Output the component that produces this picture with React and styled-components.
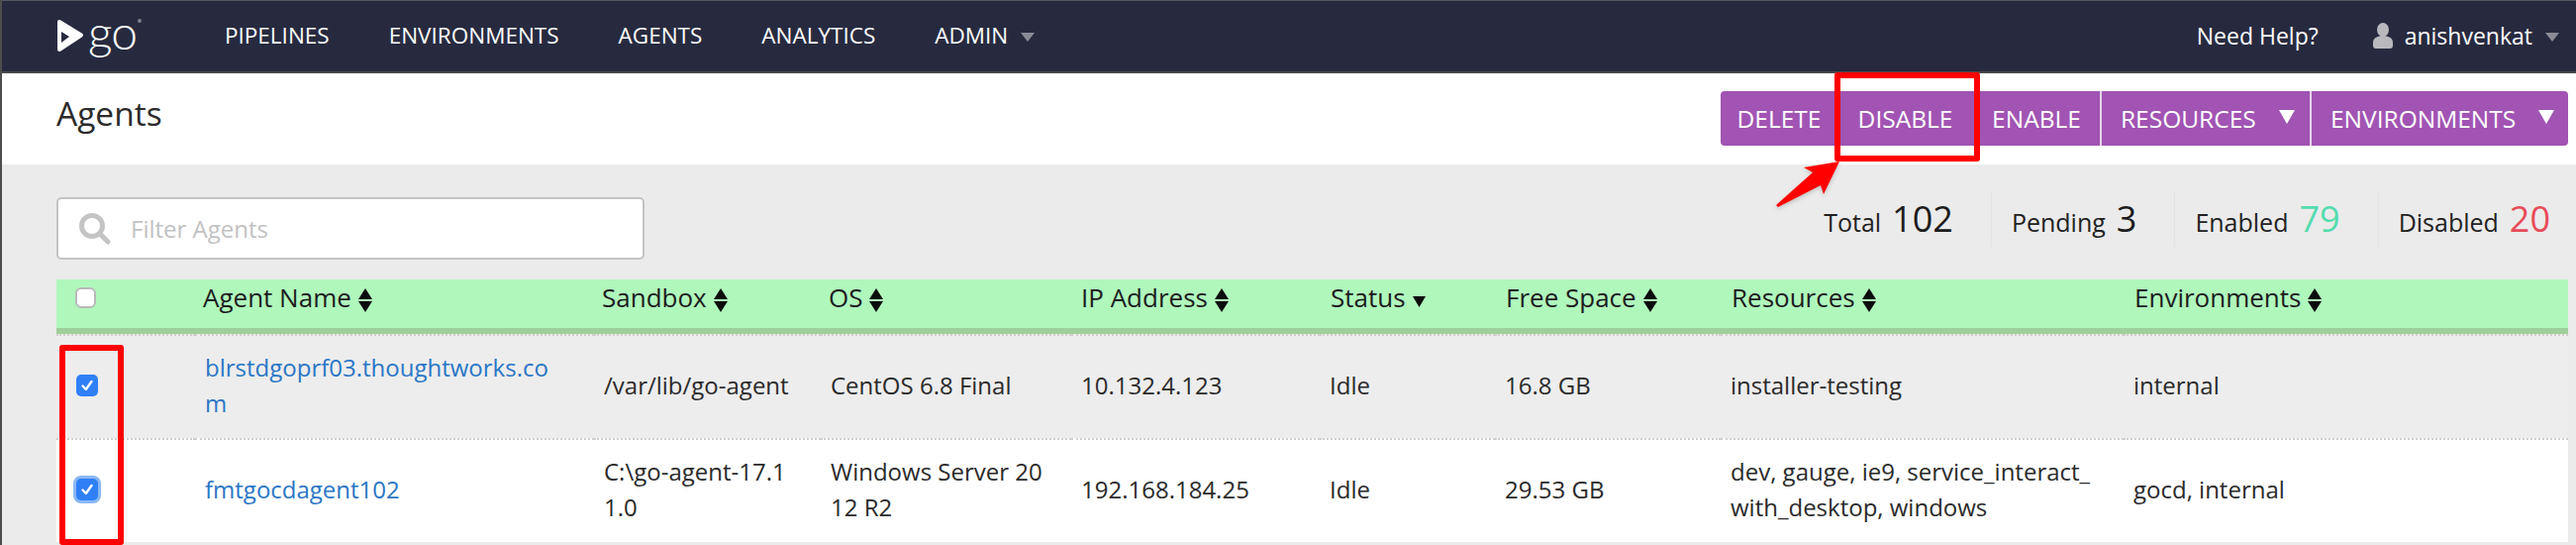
import React from 'react';
import styled, { createGlobalStyle } from 'styled-components';

const GlobalStyle = createGlobalStyle`
  html, body {
    margin: 0;
    padding: 0;
    background: #ebebeb;
    font-family: "Open Sans", "Liberation Sans", sans-serif;
  }
`;

const Page = styled.div`
  position: relative;
  width: 2602px;
  height: 550px;
  box-sizing: border-box;
  overflow: hidden;
  border-left: 2px solid #4d4d4d;
  border-top: 1px solid #55565f;
  background: #ebebeb;
`;

const Header = styled.header`
  height: 69px;
  display: flex;
  align-items: center;
  padding: 0 17px 2px 55px;
  background: #272a3f;
  border-bottom: 2px solid #4a4a4a;
  color: #fff;
`;

const Logo = styled.div`
  width: 170px;
  display: flex;
  align-items: center;
  gap: 4px;
`;

const LogoWord = styled.span`
  font-family: Lato, "Open Sans", sans-serif;
  font-weight: 300;
  font-size: 48px;
  line-height: 40px;
  letter-spacing: -1px;
  margin-top: -8px;
`;

const Nav = styled.nav`
  display: flex;
  align-items: center;
  gap: 60px;
  flex: 1;
`;

const NavItem = styled.a`
  display: flex;
  align-items: center;
  font-size: 22.5px;
  color: #fff;
  text-transform: uppercase;
`;

const Caret = styled.span`
  display: inline-block;
  width: 0;
  height: 0;
  margin-left: 13px;
  margin-top: 4px;
  border-left: 7px solid transparent;
  border-right: 7px solid transparent;
  border-top: 9px solid #8a8b96;
`;

const UserBlock = styled.div`
  display: flex;
  align-items: center;
  font-size: 23px;
  margin-left: 54px;
`;

const HelpLink = styled.a`
  font-size: 23px;
  color: #fff;
`;

const UserName = styled.span`
  margin-left: 11px;
`;

const SubHeader = styled.section`
  height: 92px;
  display: flex;
  justify-content: space-between;
  align-items: flex-start;
  padding: 0 8px 0 55px;
  background: #fff;
`;

const Title = styled.h1`
  margin: 18px 0 0;
  font-size: 33.5px;
  font-weight: 400;
  line-height: 44px;
  color: #2b2b2b;
`;

const ButtonGroup = styled.div`
  display: flex;
  margin-top: 18px;
  border-radius: 4px;
  overflow: hidden;
`;

const ActionButton = styled.button`
  height: 55px;
  width: ${(p) => p.$width}px;
  display: flex;
  align-items: center;
  justify-content: ${(p) => (p.$menu ? 'flex-start' : 'center')};
  padding: ${(p) => (p.$menu ? '0 0 0 19px' : '0')};
  border: none;
  border-left: ${(p) => (p.$divider ? '2px solid #e6d3eb' : 'none')};
  background: #a154b3;
  color: #fff;
  font-family: inherit;
  font-size: 24.5px;
  text-transform: uppercase;
`;

const MenuCaret = styled.span`
  width: 0;
  height: 0;
  margin-left: 23px;
  margin-top: -4px;
  border-left: 8px solid transparent;
  border-right: 8px solid transparent;
  border-top: 14px solid #fff;
`;

const Main = styled.main`
  padding: 33px 8px 0 55px;
`;

const FilterRow = styled.div`
  display: flex;
  justify-content: space-between;
  align-items: flex-start;
  height: 83px;
`;

const SearchBox = styled.div`
  width: 594px;
  height: 63px;
  box-sizing: border-box;
  display: flex;
  align-items: center;
  gap: 19px;
  padding-left: 20px;
  background: #fff;
  border: 2px solid #c4c4c4;
  border-radius: 5px;
`;

const SearchText = styled.span`
  font-size: 24px;
  color: #c2c2c2;
`;

const Stats = styled.div`
  display: flex;
  align-items: center;
  margin-top: -6px;
`;

const Stat = styled.div`
  display: flex;
  align-items: baseline;
  gap: 11px;
  height: 56px;
  line-height: 56px;
  padding: 0 38px 0 20px;
  font-size: 25px;
  color: #222;
  border-left: 1px solid #e3e3e3;

  &:first-child {
    border-left: none;
  }

  &:last-child {
    padding-right: 18px;
  }
`;

const StatValue = styled.span`
  font-size: 36px;
  font-weight: 500;
  color: ${(p) => p.$color || '#1c1c1c'};
`;

const Table = styled.table`
  width: 2537px;
  table-layout: fixed;
  border-collapse: separate;
  border-spacing: 0;
  font-size: 24px;
  color: #2a2a2a;
`;

const HeadCell = styled.th`
  height: 49px;
  padding: 0 0 0 ${(p) => p.$pad}px;
  vertical-align: top;
  text-align: left;
  font-size: 26px;
  font-weight: 400;
  line-height: 36px;
  color: #1c1c1c;
  background: #b0f7bc;
  border-bottom: 6px solid #9fd09b;
  white-space: nowrap;
`;

const Row = styled.tr`
  background: ${(p) => (p.$shaded ? '#ededed' : '#fff')};
`;

const Cell = styled.td`
  height: 100px;
  padding: 0 ${(p) => p.$right}px 3px 10px;
  vertical-align: middle;
  line-height: 36px;
  word-break: break-all;
  border-top: 2px dotted #cfcfcf;
`;

const CheckCell = styled(Cell)`
  padding: 0 0 3px 20px;
`;

const HeadCheckCell = styled(HeadCell)`
  padding: 8px 0 0 19px;
  height: 41px;
`;

const AgentLink = styled.a`
  color: #2a76c6;
`;

const EmptyCheck = styled.span`
  display: block;
  width: 21px;
  height: 21px;
  box-sizing: border-box;
  background: #fff;
  border: 2px solid #b9b9b9;
  border-radius: 6px;
`;

const BlueCheck = styled.span`
  display: flex;
  align-items: center;
  justify-content: center;
  width: 22px;
  height: 22px;
  background: #2f80f7;
  border-radius: 5px;
  box-shadow: ${(p) => (p.$focus ? '0 0 0 3px #8ab8f5' : 'none')};
`;

const SortWrap = styled.span`
  display: inline-block;
  margin-left: 7px;
  vertical-align: ${(p) => p.$drop}px;
  line-height: 0;
`;

const RedBox = styled.div`
  position: absolute;
  box-sizing: border-box;
  left: ${(p) => p.$x}px;
  top: ${(p) => p.$y}px;
  width: ${(p) => p.$w}px;
  height: ${(p) => p.$h}px;
  border: 6px solid #fe0000;
  border-radius: 3px;
  pointer-events: none;
`;

const ArrowSvg = styled.svg`
  position: absolute;
  left: 1790px;
  top: 160px;
  filter: drop-shadow(0 2px 2px rgba(0, 0, 0, 0.18));
`;

const GoMark = () => (
  <svg width="28" height="34" viewBox="0 0 28 34">
    <path d="M3 3 L25 16.5 L3 31 Z" fill="#fff" stroke="#fff" strokeWidth="4" strokeLinejoin="round" />
    <path d="M5 13 L13 18 L5 24 Z" fill="#272a3f" />
  </svg>
);

const GoDot = () => (
  <svg width="4" height="4" viewBox="0 0 4 4" style={{ alignSelf: 'flex-start', marginLeft: -3 }}>
    <circle cx="2" cy="2" r="2" fill="#7d7f8c" />
  </svg>
);

const SearchIcon = () => (
  <svg width="34" height="34" viewBox="0 0 34 34" fill="none" stroke="#c4c4c4" strokeLinecap="round">
    <circle cx="14" cy="14" r="10.5" strokeWidth="5" />
    <path d="M22 22 L30 30" strokeWidth="5" />
  </svg>
);

const UserIcon = () => (
  <svg width="22" height="26" viewBox="0 0 22 26" fill="#b9b9bd">
    <ellipse cx="11" cy="7" rx="6" ry="7" />
    <path d="M1 20 C1 15 6 13 11 13 C16 13 21 15 21 20 L21 23 C21 25 20 26 18 26 L4 26 C2 26 1 25 1 23 Z" />
  </svg>
);

const SortIcon = () => (
  <SortWrap $drop={-5}>
    <svg width="14" height="24" viewBox="0 0 14 24" fill="#0c0c0c">
      <path d="M7 0 L14 11 L0 11 Z" />
      <path d="M0 13 L14 13 L7 24 Z" />
    </svg>
  </SortWrap>
);

const SortDownIcon = () => (
  <SortWrap $drop={0}>
    <svg width="13" height="11" viewBox="0 0 13 11" fill="#0c0c0c">
      <path d="M0 0 L13 0 L6.5 11 Z" />
    </svg>
  </SortWrap>
);

const CheckMark = () => (
  <svg width="14" height="14" viewBox="0 0 14 14" fill="none" stroke="#fff" strokeWidth="2.4" strokeLinecap="round" strokeLinejoin="round">
    <path d="M2.5 7.5 L5.8 11 L11.5 3" />
  </svg>
);

const navItems = ['Pipelines', 'Environments', 'Agents', 'Analytics'];

const columns = [
  { key: 'check', width: 140 },
  { key: 'name', label: 'Agent Name', width: 403, pad: 8, right: 34 },
  { key: 'sandbox', label: 'Sandbox', width: 229, pad: 8, right: 20 },
  { key: 'os', label: 'OS', width: 253, pad: 8, right: 20 },
  { key: 'ip', label: 'IP Address', width: 251, pad: 10, right: 20 },
  { key: 'status', label: 'Status', width: 177, pad: 11, right: 20 },
  { key: 'free', label: 'Free Space', width: 228, pad: 11, right: 20 },
  { key: 'resources', label: 'Resources', width: 407, pad: 11, right: 26 },
  { key: 'environments', label: 'Environments', width: 449, pad: 11, right: 20 },
];

const agents = [
  {
    name: 'blrstdgoprf03.thoughtworks.com',
    sandbox: '/var/lib/go-agent',
    os: 'CentOS 6.8 Final',
    ip: '10.132.4.123',
    status: 'Idle',
    free: '16.8 GB',
    resources: 'installer-testing',
    environments: 'internal',
  },
  {
    name: 'fmtgocdagent102',
    sandbox: 'C:\\go-agent-17.11.0',
    os: 'Windows Server 2012 R2',
    ip: '192.168.184.25',
    status: 'Idle',
    free: '29.53 GB',
    resources: 'dev, gauge, ie9, service_interact_with_desktop, windows',
    environments: 'gocd, internal',
  },
];

export default function App() {
  return (
    <Page>
      <GlobalStyle />
      <Header>
        <Logo>
          <GoMark />
          <LogoWord>go</LogoWord>
          <GoDot />
        </Logo>
        <Nav>
          {navItems.map((item) => (
            <NavItem key={item}>{item}</NavItem>
          ))}
          <NavItem>
            Admin
            <Caret />
          </NavItem>
        </Nav>
        <HelpLink>Need Help?</HelpLink>
        <UserBlock>
          <UserIcon />
          <UserName>anishvenkat</UserName>
          <Caret />
        </UserBlock>
      </Header>

      <SubHeader>
        <Title>Agents</Title>
        <ButtonGroup>
          <ActionButton $width={118}>Delete</ActionButton>
          <ActionButton $width={137}>Disable</ActionButton>
          <ActionButton $width={128}>Enable</ActionButton>
          <ActionButton $width={212} $divider $menu>
            Resources
            <MenuCaret />
          </ActionButton>
          <ActionButton $width={261} $divider $menu>
            Environments
            <MenuCaret />
          </ActionButton>
        </ButtonGroup>
      </SubHeader>

      <Main>
        <FilterRow>
          <SearchBox>
            <SearchIcon />
            <SearchText>Filter Agents</SearchText>
          </SearchBox>
          <Stats>
            <Stat>
              Total <StatValue>102</StatValue>
            </Stat>
            <Stat>
              Pending <StatValue>3</StatValue>
            </Stat>
            <Stat>
              Enabled <StatValue $color="#54dcae">79</StatValue>
            </Stat>
            <Stat>
              Disabled <StatValue $color="#e84c5a">20</StatValue>
            </Stat>
          </Stats>
        </FilterRow>

        <Table>
          <colgroup>
            {columns.map((col) => (
              <col key={col.key} style={{ width: col.width }} />
            ))}
          </colgroup>
          <thead>
            <tr>
              <HeadCheckCell>
                <EmptyCheck />
              </HeadCheckCell>
              {columns.slice(1).map((col) => (
                <HeadCell key={col.key} $pad={col.pad}>
                  {col.label}
                  {col.key === 'status' ? <SortDownIcon /> : <SortIcon />}
                </HeadCell>
              ))}
            </tr>
          </thead>
          <tbody>
            {agents.map((agent, i) => (
              <Row key={agent.name} $shaded={i === 0}>
                <CheckCell>
                  <BlueCheck $focus={i === 1}>
                    <CheckMark />
                  </BlueCheck>
                </CheckCell>
                <Cell $right={34}>
                  <AgentLink>{agent.name}</AgentLink>
                </Cell>
                {columns.slice(2).map((col) => (
                  <Cell key={col.key} $right={col.right}>
                    {agent[col.key]}
                  </Cell>
                ))}
              </Row>
            ))}
          </tbody>
        </Table>
      </Main>

      <RedBox $x={1851} $y={72} $w={147} $h={90} />
      <RedBox $x={58} $y={347} $w={65} $h={202} />
      <ArrowSvg width="72" height="52" viewBox="0 0 72 52">
        <path d="M66 2 L30 8 L39 13 L2 46 L4 48 L47 26 L50 35 Z" fill="#fe0000" />
      </ArrowSvg>
    </Page>
  );
}
